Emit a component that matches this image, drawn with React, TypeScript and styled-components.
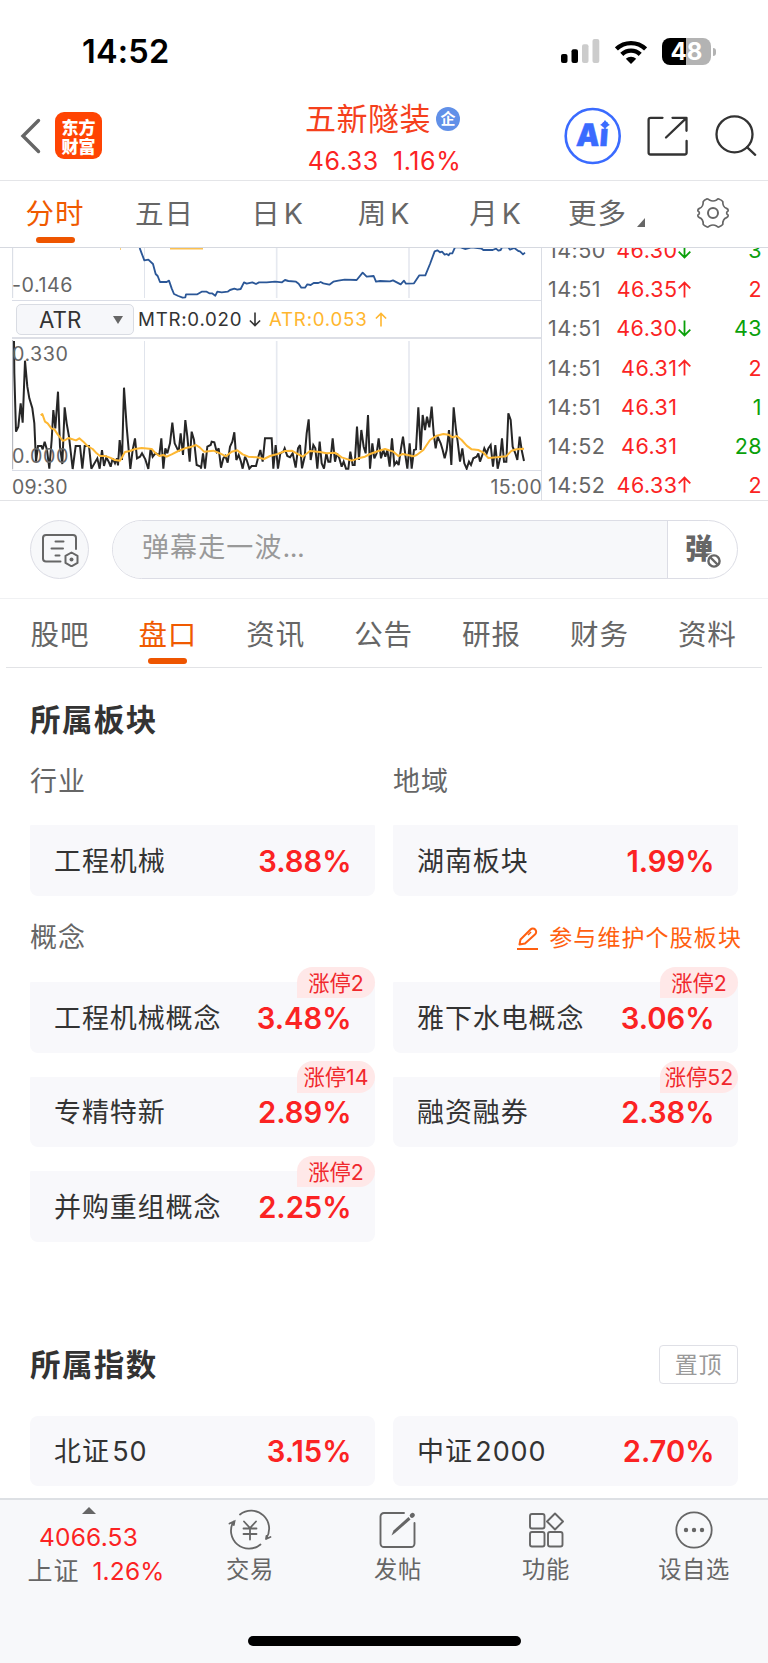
import React from 'react';
import styled, { createGlobalStyle } from 'styled-components';

const GlobalStyle = createGlobalStyle`
  * { box-sizing: border-box; }
  body {
    margin: 0;
    background: #fff;
    font-family: Inter, "Noto Sans CJK SC", sans-serif;
    color: #333;
  }
  svg { display: block; flex: none; }
`;

const RED = '#fb2323';
const GREEN = '#0aa00a';
const ORANGE = '#f05a00';
const GREY = '#666';

const Page = styled.div`
  width: 768px;
  height: 1663px;
  display: flex;
  flex-direction: column;
  overflow: hidden;
  white-space: nowrap;
`;

/* ---------- status bar ---------- */
const StatusBar = styled.div`
  height: 96px;
  flex: none;
  display: flex;
  align-items: flex-start;
  padding: 32px 52px 0 82px;
  justify-content: space-between;
`;
const Clock = styled.div`
  font-size: 32.5px;
  line-height: 39px;
  font-weight: 600;
  letter-spacing: 0.2px;
  color: #000;
`;
const StatusIcons = styled.div`
  display: flex;
  align-items: center;
  height: 39px;
  gap: 15px;
`;
const Battery = styled.div`
  width: 54px;
  height: 28px;
  display: flex;
  align-items: center;
  gap: 2px;
`;
const BatteryBody = styled.div`
  width: 49px;
  height: 27px;
  border-radius: 8px;
  background: linear-gradient(to right, #000 24px, #b3b3b3 24px);
  color: #fff;
  font-size: 24px;
  line-height: 27px;
  font-weight: 700;
  text-align: center;
`;
const BatteryNub = styled.div`
  width: 3px;
  height: 8px;
  border-radius: 0 3px 3px 0;
  background: #b3b3b3;
`;

/* ---------- header ---------- */
const Header = styled.header`
  height: 85px;
  flex: none;
  border-bottom: 1px solid #e4e5e8;
  display: grid;
  grid-template-columns: 282px 203px 1fr;
`;
const HeaderLeft = styled.div`
  display: flex;
  align-items: flex-start;
  padding: 16px 0 0 20px;
  gap: 13px;
`;
const Logo = styled.div`
  width: 47px;
  height: 47px;
  border-radius: 9px;
  background: #ff4403;
  color: #fff;
  display: flex;
  flex-direction: column;
  align-items: center;
  justify-content: center;
  font: 800 17px/19px "Noto Sans CJK SC", sans-serif;
`;
const HeaderCenter = styled.div`
  display: flex;
  flex-direction: column;
  align-items: center;
`;
const StockName = styled.div`
  display: flex;
  align-items: center;
  height: 38px;
  margin-top: 4px;
  gap: 5px;
  font-size: 31px;
  line-height: 38px;
  letter-spacing: 0.5px;
  margin-left: -2px;
  color: #f5401c;
`;
const CorpBadge = styled.span`
  width: 24px;
  height: 24px;
  border-radius: 50%;
  background: #6190e8;
  color: #fff;
  font-size: 15px;
  line-height: 23px;
  letter-spacing: 0;
  font-weight: 700;
  text-align: center;
`;
const StockQuote = styled.div`
  display: flex;
  gap: 14px;
  margin-top: 8px;
  font-size: 25px;
  line-height: 30px;
  letter-spacing: 0.6px;
  margin-left: 2px;
  color: ${RED};
`;
const HeaderRight = styled.div`
  display: flex;
  align-items: flex-start;
  padding: 11px 0 0 79px;
`;

/* ---------- period tabs ---------- */
const PeriodTabs = styled.nav`
  height: 67px;
  flex: none;
  border-bottom: 1.5px solid #d6d9e0;
  display: grid;
  grid-template-columns: 110px 109px 117px 96px 127px 75px 1fr;
`;
const Tab = styled.div<{ $active?: boolean; $top: number }>`
  display: flex;
  flex-direction: column;
  align-items: center;
  padding-top: ${(p) => p.$top}px;
  font-size: 28.5px;
  line-height: 36px;
  letter-spacing: 0.9px;
  word-spacing: -6px;
  color: ${(p) => (p.$active ? ORANGE : GREY)};
  &::after {
    content: '';
    width: 39px;
    height: 6px;
    margin-top: 5px;
    border-radius: 3px;
    background: ${(p) => (p.$active ? '#ee5500' : 'transparent')};
  }
`;
const MoreLabel = styled.span`
  display: flex;
  align-items: flex-end;
  gap: 10px;
  margin-left: 20px;
`;
const GearCell = styled.div`
  display: flex;
  align-items: flex-start;
  justify-content: center;
  padding: 15px 0 0 24px;
`;

/* ---------- market area ---------- */
const Market = styled.section`
  height: 253px;
  flex: none;
  display: flex;
  border-bottom: 1px solid #e2e3e6;
  overflow: hidden;
`;
const Charts = styled.div`
  width: 542px;
  display: flex;
  flex-direction: column;
  padding-left: 12px;
  border-right: 1px solid #dadde4;
`;
const Plot = styled.div<{ $h: number; $line: number }>`
  position: relative;
  height: ${(p) => p.$h}px;
  flex: none;
  border-bottom: ${(p) => p.$line}px solid #dadde6;
`;
const AxisLabel = styled.span<{ $top: number }>`
  position: absolute;
  left: 0;
  top: ${(p) => p.$top}px;
  font-size: 19.7px;
  line-height: 24px;
  letter-spacing: 0.5px;
  color: ${GREY};
`;
const IndicatorBar = styled.div`
  height: 38px;
  flex: none;
  display: flex;
  align-items: center;
  padding: 1px 0 0 4px;
  border-bottom: 2px solid #dddfe6;
  font-size: 18.7px;
  letter-spacing: 0.75px;
`;
const IndicatorSelect = styled.div`
  width: 118px;
  height: 31px;
  border: 1px solid #d9dce3;
  border-radius: 5px;
  background: #f6f7fa;
  display: flex;
  align-items: center;
  justify-content: space-between;
  padding: 0 10px 0 22px;
  margin-right: 4px;
  font-size: 22.3px;
  letter-spacing: 0;
`;
const IndicatorValue = styled.span<{ $color: string; $w: number }>`
  display: flex;
  align-items: center;
  justify-content: space-between;
  width: ${(p) => p.$w}px;
  margin-right: 8px;
  color: ${(p) => p.$color};
`;
const TimeAxis = styled.div`
  display: flex;
  justify-content: space-between;
  padding-top: 4px;
  margin-right: -1px;
  font-size: 19.5px;
  line-height: 24px;
  letter-spacing: 0.3px;
  color: ${GREY};
`;
const Trades = styled.div`
  flex: 1;
  display: flex;
  flex-direction: column;
  margin-top: -17.3px;
  padding: 0 6px 0 6px;
`;
const TradeRow = styled.div`
  height: 39.1px;
  flex: none;
  display: grid;
  grid-template-columns: 62px 67.5px 16px 1fr;
  align-items: center;
  font-size: 21.5px;
  letter-spacing: 0.45px;
`;
const TradeTime = styled.span`
  color: ${GREY};
`;
const TradePrice = styled.span`
  color: ${RED};
  text-align: right;
`;
const TradeCount = styled.span<{ $up: boolean }>`
  color: ${(p) => (p.$up ? RED : GREEN)};
  text-align: right;
`;

/* ---------- comment bar ---------- */
const CommentBar = styled.div`
  height: 98px;
  flex: none;
  display: flex;
  align-items: flex-start;
  padding: 19px 30px 0;
  gap: 23px;
  border-bottom: 1px solid #f0f1f3;
`;
const RoundButton = styled.div`
  width: 59px;
  height: 59px;
  border-radius: 50%;
  border: 1px solid #dcdde5;
  background: #f7f8fa;
  display: flex;
  align-items: center;
  justify-content: center;
`;
const CommentPill = styled.div`
  flex: 1;
  height: 59px;
  border: 1px solid #dcdde5;
  border-radius: 30px;
  display: flex;
  overflow: hidden;
`;
const CommentInput = styled.div`
  flex: 1;
  background: #f7f8fa;
  border-right: 1px solid #dcdde5;
  padding: 9px 0 0 29px;
  font-size: 27px;
  line-height: 36px;
  letter-spacing: 1.1px;
  color: #999;
`;
const Ellipsis = styled.span`
  letter-spacing: -0.5px;
`;
const BarrageToggle = styled.div`
  width: 69px;
  position: relative;
  padding: 8px 0 0 17px;
  font: 800 28px/36px "Noto Sans CJK SC", sans-serif;
  color: #666;
  svg { position: absolute; left: 38px; top: 32px; }
`;

/* ---------- content tabs ---------- */
const ContentTabs = styled.nav`
  height: 69px;
  flex: none;
  margin: 0 6px;
  border-bottom: 1px solid #e2e3e6;
  display: grid;
  grid-template-columns: repeat(7, 107.9px);
`;

/* ---------- plates ---------- */
const Content = styled.main`
  flex: 1;
  padding: 0 30px;
`;
const SectionHead = styled.div<{ $top: number; $h: number }>`
  display: flex;
  align-items: center;
  justify-content: space-between;
  margin-top: ${(p) => p.$top}px;
  height: ${(p) => p.$h}px;
`;
const SectionTitle = styled.h2`
  margin: 0;
  font-size: 30.5px;
  line-height: 40px;
  letter-spacing: 1.4px;
  font-weight: 600;
  color: #333;
`;
const SubTitle = styled.div`
  font-size: 27px;
  line-height: 36px;
  letter-spacing: 0.9px;
  color: ${GREY};
`;
const Columns = styled.div<{ $top?: number }>`
  display: grid;
  grid-template-columns: 345px 345px;
  column-gap: 18px;
  row-gap: 24px;
  margin-top: ${(p) => p.$top || 0}px;
`;
const MaintainLink = styled.div`
  display: flex;
  align-items: center;
  gap: 11px;
  margin-right: -4px;
  font-size: 23px;
  line-height: 30px;
  letter-spacing: 1.1px;
  color: #ff5f0f;
`;
const Card = styled.div<{ $round?: boolean }>`
  position: relative;
  height: 70.6px;
  border-radius: ${(p) => (p.$round ? '8px' : '1px 1px 8px 8px')};
  background: #f8f8fb;
  display: flex;
  align-items: center;
  justify-content: space-between;
  padding: 2px 23.5px 0 24px;
`;
const CardName = styled.span`
  font-size: 27px;
  line-height: 36px;
  letter-spacing: 0.9px;
  word-spacing: -6px;
  color: #333;
`;
const CardPercent = styled.span`
  font-size: 29.2px;
  line-height: 36px;
  font-weight: 600;
  color: ${RED};
`;
const LimitBadge = styled.span`
  position: absolute;
  right: 0;
  top: -15.5px;
  width: 78px;
  height: 31.5px;
  border-radius: 16px 16px 16px 0;
  background: #ffe8e8;
  color: #f0282d;
  font-size: 21.3px;
  line-height: 32px;
  text-align: center;
`;
const PinButton = styled.div`
  width: 79px;
  height: 39px;
  border: 1px solid #dfe0e6;
  border-radius: 4px;
  font-size: 23px;
  line-height: 38px;
  letter-spacing: 0.8px;
  text-align: center;
  color: #999;
`;

/* ---------- bottom bar ---------- */
const BottomBar = styled.footer`
  height: 165px;
  flex: none;
  display: flex;
  flex-direction: column;
  justify-content: space-between;
  border-top: 2px solid #dde0e4;
  background: #f7f8fa;
`;
const BottomItems = styled.div`
  display: grid;
  grid-template-columns: 176px repeat(4, 148px);
`;
const IndexItem = styled.div`
  display: flex;
  flex-direction: column;
  align-items: center;
  padding: 7px 0 0 1px;
  color: ${RED};
  font-size: 24.5px;
  line-height: 34px;
  letter-spacing: 0.2px;
`;
const IndexValue = styled.div`
  margin-top: 6px;
  line-height: 34px;
`;
const IndexChange = styled.div`
  display: flex;
  gap: 13px;
  margin-left: 15px;
`;
const IndexName = styled.span`
  color: ${GREY};
  font-size: 25px;
  letter-spacing: 1px;
`;
const NavItem = styled.div`
  display: flex;
  flex-direction: column;
  align-items: center;
  padding-top: 8px;
  font-size: 23.3px;
  line-height: 32px;
  letter-spacing: 0.6px;
  color: ${GREY};
  svg { margin-bottom: 2px; }
`;
const HomeIndicator = styled.div`
  width: 273px;
  height: 10px;
  border-radius: 5px;
  background: #000;
  margin: 0 auto 17px;
`;

/* Chart series, in thirds of a pixel */
const BLUE_A =
  '419,24 425,40 433,61 445,59 459,72 467,102 473,108 480,126 500,126 507,122 515,145 522,162 535,168 548,173 556,172 558,163 592,163 605,155 620,155 628,160 636,160 646,167 652,155 665,157 683,155 690,150 703,146 712,149 722,147 732,127 740,131 757,127 768,132 777,127 800,127 825,125 846,127 855,120 865,123 888,125 896,131 904,143 915,143 922,133 932,135 941,129 955,129 962,126 970,130 988,134 1000,125 1015,122 1034,119 1070,120 1088,98 1100,110 1121,108 1128,125 1140,123 1170,124 1179,121 1202,133 1212,122 1218,131 1242,130 1258,106 1276,106 1290,72 1304,34 1312,31 1320,37 1326,35 1334,44 1340,42 1346,46 1350,40 1357,40 1365,22 1382,22 1395,27 1415,22 1445,26 1450,30 1478,30 1488,26 1495,32 1502,30 1506,22 1525,22 1530,29 1543,24 1555,33 1560,34 1569,43 1575,38';
const MTR =
  '42,303 43,400 48,575 55,560 62,490 68,548 75,362 82,440 88,475 97,505 103,550 108,665 114,618 124,618 128,628 134,605 141,630 148,686 155,600 160,510 166,565 174,455 180,620 187,672 194,502 200,550 207,590 218,687 227,618 240,618 247,686 254,618 267,618 274,686 292,655 299,686 306,630 312,678 319,652 326,665 332,680 338,655 345,670 351,655 354,676 359,600 366,660 372,443 380,560 391,687 398,630 405,595 411,655 420,650 426,640 436,658 445,687 452,625 458,650 466,640 478,645 484,595 490,686 496,625 502,640 510,610 517,548 524,610 536,635 542,580 549,645 556,540 562,590 569,665 575,575 582,600 590,675 602,680 603,686 609,640 615,686 622,620 632,615 635,605 643,607 650,635 656,625 663,683 670,655 676,648 683,668 690,620 697,605 703,577 709,660 716,645 723,665 728,686 735,650 740,660 748,686 755,678 768,678 775,650 781,630 788,665 795,595 815,595 820,686 827,615 834,686 841,640 850,635 854,625 862,648 870,652 878,640 887,683 894,625 900,615 906,685 914,650 920,580 926,538 932,660 940,615 946,625 952,686 959,605 965,670 972,686 979,640 985,665 991,665 998,595 1005,665 1011,640 1018,655 1025,680 1031,665 1038,686 1045,686 1051,635 1058,675 1064,675 1071,560 1077,660 1084,570 1091,620 1097,640 1104,525 1110,686 1117,610 1123,655 1130,640 1136,595 1143,655 1150,630 1156,650 1162,630 1169,680 1176,595 1183,675 1190,665 1196,675 1203,625 1209,590 1216,645 1222,686 1229,610 1235,686 1242,630 1248,628 1255,502 1262,630 1268,525 1275,570 1281,530 1288,562 1295,500 1301,580 1307,625 1313,590 1322,610 1328,630 1334,655 1340,630 1347,570 1354,675 1361,502 1368,570 1373,605 1380,665 1387,625 1393,670 1400,686 1407,665 1413,675 1420,655 1430,650 1435,640 1440,665 1447,645 1453,625 1460,640 1465,625 1472,615 1479,680 1486,615 1493,686 1500,655 1506,595 1512,665 1519,665 1525,520 1532,540 1538,620 1546,640 1552,660 1559,590 1565,630 1572,663';
const ATR =
  '122,526 127,522 135,545 143,550 154,565 163,568 173,583 188,602 196,600 205,594 215,597 228,601 238,595 250,605 262,618 278,627 290,640 300,648 315,648 330,653 345,660 360,662 366,652 375,636 390,633 405,627 425,624 455,627 465,638 478,648 490,645 500,650 515,643 535,633 555,625 575,620 588,615 600,623 612,635 640,632 660,640 678,649 695,635 712,631 728,643 745,650 770,652 792,657 810,648 830,643 855,633 875,632 890,640 908,650 930,633 960,636 980,640 1005,638 1025,652 1055,662 1075,655 1095,650 1110,642 1135,633 1155,627 1180,635 1195,648 1208,642 1240,649 1250,645 1270,630 1290,600 1310,587 1330,582 1345,584 1358,592 1370,588 1385,600 1400,617 1415,628 1435,630 1450,638 1465,654 1490,652 1518,649 1535,632 1550,628 1572,626';

const Arrow = ({ up, color, w = 13, h = 17 }: { up: boolean; color: string; w?: number; h?: number }) => (
  <svg width={w} height={h} viewBox="0 0 13 17" fill="none" stroke={color} strokeWidth="1.8">
    {up ? <path d="M6.5 16.5V1.500M.7 7.300L6.500 1.500L12.300 7.300" /> : <path d="M6.5 .5v15M.7 9.700L6.500 15.500L12.300 9.700" />}
  </svg>
);

const trades: [string, string, number, number, boolean][] = [
  ['14:50', '46.30', -1, 3, false],
  ['14:51', '46.35', 1, 2, true],
  ['14:51', '46.30', -1, 43, false],
  ['14:51', '46.31', 1, 2, true],
  ['14:51', '46.31', 0, 1, false],
  ['14:52', '46.31', 0, 28, false],
  ['14:52', '46.33', 1, 2, true],
];

const concepts: [string, string, number][] = [
  ['工程机械概念', '3.48%', 2],
  ['雅下水电概念', '3.06%', 2],
  ['专精特新', '2.89%', 14],
  ['融资融券', '2.38%', 52],
  ['并购重组概念', '2.25%', 2],
];

const Plate = ({ name, pct, limit, round }: { name: string; pct: string; limit?: number; round?: boolean }) => (
  <Card $round={round}>
    <CardName>{name}</CardName>
    <CardPercent>{pct}</CardPercent>
    {limit ? <LimitBadge>涨停{limit}</LimitBadge> : null}
  </Card>
);

const SignalIcon = () => (
  <svg width="39" height="25" viewBox="0 0 39 25">
    <rect x="0" y="15" width="6.5" height="9" rx="2" />
    <rect x="10.5" y="10.3" width="6.5" height="13.7" rx="2" />
    <rect x="21" y="5.2" width="6.5" height="18.8" rx="2" fill="#ccc" />
    <rect x="31.5" y="0" width="6.8" height="24" rx="2" fill="#ccc" />
  </svg>
);

const WifiIcon = () => (
  <svg width="32" height="24" viewBox="0 0 32 24" fill="none" stroke="#000" strokeWidth="4.4">
    <path d="M1.4 9A21 21 0 0 1 30.6 9" />
    <path d="M6.8 14.4A13.2 13.2 0 0 1 25.2 14.4" />
    <path d="M16 24L10.8 18.8A7.5 7.5 0 0 1 21.2 18.8Z" fill="#000" stroke="none" />
  </svg>
);

const AiIcon = () => (
  <svg width="58" height="58" viewBox="0 0 58 58">
    <circle cx="28.7" cy="29" r="27" fill="none" stroke="#3a6bff" strokeWidth="2.6" />
    <text x="11" y="39.5" fontFamily="Inter, sans-serif" fontWeight="900" fontSize="31" fill="#3a6bff" stroke="#3a6bff" strokeWidth="0.5" textLength="32" lengthAdjust="spacingAndGlyphs" transform="translate(3.5 0) skewX(-4)">Ai</text>
    <path d="M41 13.500l1.500 2.800 2.800 1.500-2.800 1.500-1.500 2.800-1.500-2.800-2.800-1.500 2.800-1.500z" fill="#3a6bff" stroke="#3a6bff" strokeWidth="0.8" />
  </svg>
);

const GearIcon = () => (
  <svg width="34" height="34" viewBox="-17 -17 34 34" fill="none" stroke="#666" strokeWidth="1.7" strokeLinejoin="round">
    <path d="M-5.8 -14.2Q-4.6 -14.2 -3.6 -13Q0 -11 3.6 -13Q4.6 -14.2 5.8 -14Q9 -12.8 9.8 -11.4Q9.6 -6 13.6 -4.6Q15.4 -3.8 15.2 -2.200Q12 0 15.200 2.200Q15.4 3.8 13.6 4.6Q9.6 6 9.8 11.4Q9 12.8 5.8 14Q4.6 14.2 3.6 13Q0 11 -3.6 13Q-4.6 14.2 -5.8 14Q-9 12.8 -9.8 11.4Q-9.6 6 -13.6 4.6Q-15.4 3.8 -15.2 2.200Q-12 0 -15.200 -2.200Q-15.4 -3.8 -13.6 -4.6Q-9.6 -6 -9.8 -11.4Q-9 -12.8 -5.8 -14.2Z" />
    <circle r="5" strokeWidth="2" />
  </svg>
);

export default function App() {
  return (
    <Page>
      <GlobalStyle />
      <StatusBar>
        <Clock>14:52</Clock>
        <StatusIcons>
          <SignalIcon />
          <WifiIcon />
          <Battery>
            <BatteryBody>48</BatteryBody>
            <BatteryNub />
          </Battery>
        </StatusIcons>
      </StatusBar>

      <Header>
        <HeaderLeft>
          <svg width="22" height="48" viewBox="0 0 22 48" fill="none" stroke="#666" strokeWidth="3.4">
            <path d="M18.5 8.500L3 24L18.500 39.500" strokeLinecap="round" />
          </svg>
          <Logo>
            <span>东方</span>
            <span>财富</span>
          </Logo>
        </HeaderLeft>
        <HeaderCenter>
          <StockName>
            五新隧装<CorpBadge>企</CorpBadge>
          </StockName>
          <StockQuote>
            <span>46.33</span>
            <span>1.16%</span>
          </StockQuote>
        </HeaderCenter>
        <HeaderRight>
          <AiIcon />
          <svg width="66" height="58" viewBox="0 0 66 58" fill="none" stroke="#333" strokeWidth="2.3" strokeLinecap="round" strokeLinejoin="round">
            <path d="M40.5 10.800H28.600a2 2 0 0 0-2 2v32.700a2 2 0 0 0 2 2h34a2 2 0 0 0 2-2V34" />
            <path d="M50.5 10.800h14v13M64 11.300L44 30.500" />
          </svg>
          <svg width="76" height="58" viewBox="0 0 76 58" fill="none" stroke="#333" strokeWidth="2.3" strokeLinecap="round">
            <circle cx="46.5" cy="27.3" r="18" />
            <path d="M59 40.200l8.200 7.600" />
          </svg>
        </HeaderRight>
      </Header>

      <PeriodTabs>
        <Tab $top={15} $active>分时</Tab>
        <Tab $top={15}>五日</Tab>
        <Tab $top={15}>日 K</Tab>
        <Tab $top={15}>周 K</Tab>
        <Tab $top={15}>月 K</Tab>
        <Tab $top={15}>
          <MoreLabel>
            更多
            <svg width="8" height="14" viewBox="0 0 8 14"><path d="M8 0v9H0z" fill="#666" /></svg>
          </MoreLabel>
        </Tab>
        <GearCell><GearIcon /></GearCell>
      </PeriodTabs>

      <Market>
        <Charts>
          <Plot $h={53} $line={1}>
            <svg width="529" height="52" viewBox="36 24 1587 156" fill="none">
              <path d="M38 24V174" stroke="#d5d9e2" strokeWidth="3" />
              <path d="M433.5 24V174" stroke="#e0e4ec" strokeWidth="3" />
              <path d="M830 24V174M1227 24V174" stroke="#e6e9f0" strokeWidth="5" />
              <path d="M360 27h3M510 26h99" stroke="#fbc050" strokeWidth="5" />
              <polyline points={BLUE_A} stroke="#2b5797" strokeWidth="5.5" strokeLinejoin="round" />
            </svg>
            <AxisLabel $top={25}>-0.146</AxisLabel>
          </Plot>
          <IndicatorBar>
            <IndicatorSelect>
              ATR
              <svg width="10" height="8" viewBox="0 0 10 8"><path d="M0 0h10L5 8z" fill="#666" /></svg>
            </IndicatorSelect>
            <IndicatorValue $color="#333" $w={123}>
              MTR:0.020
              <Arrow up={false} color="#333" w={12} h={15} />
            </IndicatorValue>
            <IndicatorValue $color="#ffb62e" $w={118}>
              ATR:0.053
              <Arrow up color="#ffb62e" w={12} h={15} />
            </IndicatorValue>
          </IndicatorBar>
          <Plot $h={132} $line={1}>
            <svg width="529" height="131" viewBox="36 297 1587 393" fill="none">
              <path d="M38 300V688" stroke="#aaadb5" strokeWidth="3" />
              <path d="M433.5 303V690" stroke="#e0e4ec" strokeWidth="3" />
              <path d="M830 303V690M1227 303V690" stroke="#e6e9f0" strokeWidth="5" />
              <polyline points={MTR} stroke="#262626" strokeWidth="6" strokeLinejoin="miter" strokeMiterlimit="3" />
              <polyline points={ATR} stroke="#fdb834" strokeWidth="6" strokeLinejoin="round" />
            </svg>
            <AxisLabel $top={2.5}>0.330</AxisLabel>
            <AxisLabel $top={105}>0.000</AxisLabel>
          </Plot>
          <TimeAxis>
            <span>09:30</span>
            <span>15:00</span>
          </TimeAxis>
        </Charts>
        <Trades>
          {trades.map(([time, price, dir, count, up], i) => (
            <TradeRow key={i}>
              <TradeTime>{time}</TradeTime>
              <TradePrice>{price}</TradePrice>
              <span>{dir !== 0 && <Arrow up={dir > 0} color={dir > 0 ? RED : GREEN} />}</span>
              <TradeCount $up={up}>{count}</TradeCount>
            </TradeRow>
          ))}
        </Trades>
      </Market>

      <CommentBar>
        <RoundButton>
          <svg width="38" height="34" viewBox="0 0 38 34" fill="none" stroke="#666" strokeWidth="2" strokeLinecap="round">
            <path d="M19.5 28.500H5a3 3 0 0 1-3-3V5a3 3 0 0 1 3-3h27a3 3 0 0 1 3 3v11" />
            <path d="M14.5 8.500h8M10.500 15.500h11.500M14.500 22.500h4" />
            <path d="M30.5 19.500l6 3.400v7l-6 3.400-6-3.400v-7z" strokeLinejoin="round" />
            <circle cx="30.5" cy="26.5" r="2" fill="#666" stroke="none" />
          </svg>
        </RoundButton>
        <CommentPill>
          <CommentInput>弹幕走一波<Ellipsis>...</Ellipsis></CommentInput>
          <BarrageToggle>
            弹
            <svg width="16" height="16" viewBox="0 0 16 16">
              <circle cx="8" cy="8" r="8" fill="#fff" />
              <circle cx="8" cy="8" r="5.6" fill="none" stroke="#666" strokeWidth="2.4" />
              <path d="M4.5 4.500l7 7" stroke="#666" strokeWidth="2.4" />
            </svg>
          </BarrageToggle>
        </CommentPill>
      </CommentBar>

      <ContentTabs>
        {['股吧', '盘口', '资讯', '公告', '研报', '财务', '资料'].map((t) => (
          <Tab key={t} $top={17.5} $active={t === '盘口'}>{t}</Tab>
        ))}
      </ContentTabs>

      <Content>
        <SectionHead $top={31.5} $h={40}>
          <SectionTitle>所属板块</SectionTitle>
        </SectionHead>
        <Columns $top={24}>
          <SubTitle>行业</SubTitle>
          <SubTitle>地域</SubTitle>
        </Columns>
        <Columns $top={25.8}>
          <Plate name="工程机械" pct="3.88%" />
          <Plate name="湖南板块" pct="1.99%" />
        </Columns>
        <SectionHead $top={24.4} $h={36}>
          <SubTitle>概念</SubTitle>
          <MaintainLink>
            <svg width="21" height="23" viewBox="0 0 21 23" fill="none" stroke="#ff5f0f" strokeWidth="2" strokeLinejoin="round">
              <path d="M0 22h21" />
              <path d="M2.5 17.500l1-5L13.500 2.500a3.300 3.300 0 0 1 4.700 4.700L8 16.500z" />
              <path d="M11 8l3-3" strokeWidth="1.6" />
            </svg>
            参与维护个股板块
          </MaintainLink>
        </SectionHead>
        <Columns $top={26}>
          {concepts.map(([name, pct, limit]) => (
            <Plate key={name} name={name} pct={pct} limit={limit} />
          ))}
        </Columns>
        <SectionHead $top={102.5} $h={40}>
          <SectionTitle>所属指数</SectionTitle>
          <PinButton>置顶</PinButton>
        </SectionHead>
        <Columns $top={31.1}>
          <Plate name="北证 50" pct="3.15%" round />
          <Plate name="中证 2000" pct="2.70%" round />
        </Columns>
      </Content>

      <BottomBar>
        <BottomItems>
          <IndexItem>
            <svg width="14" height="7" viewBox="0 0 14 7"><path d="M0 7L7 0l7 7z" fill="#666" /></svg>
            <IndexValue>4066.53</IndexValue>
            <IndexChange>
              <IndexName>上证</IndexName>
              <span>1.26%</span>
            </IndexChange>
          </IndexItem>
          <NavItem>
            <svg width="44" height="44" viewBox="0 0 44 44" fill="none" stroke="#666" strokeWidth="1.8" strokeLinecap="round">
              <path d="M12 6.500A18 18 0 0 1 38.200 30.500M38 31l.500-3M38 31l4.500-2" />
              <path d="M32.5 36.500A18 18 0 0 1 5.500 13.500M1.500 15.500L6.500 13.200L5.800 17" />
              <path d="M16 13.500l6 6.500 6-6.500M22 20v11.500M15.500 20.500h13M15.500 26h13" />
            </svg>
            交易
          </NavItem>
          <NavItem>
            <svg width="44" height="44" viewBox="0 0 44 44" fill="none" stroke="#666" strokeWidth="1.9" strokeLinecap="round">
              <path d="M28 5H8a3.500 3.500 0 0 0-3.500 3.500v27A3.500 3.500 0 0 0 8 39h27a3.500 3.500 0 0 0 3.500-3.500V15" />
              <path d="M15.5 27.500l2-5L32.500 9l2 2.500L19 25z" fill="#666" stroke="none" />
              <path d="M36 7.700l.6-.6" strokeWidth="4.5" />
            </svg>
            发帖
          </NavItem>
          <NavItem>
            <svg width="44" height="44" viewBox="0 0 44 44" fill="none" stroke="#666" strokeWidth="1.9" strokeLinejoin="round">
              <rect x="6" y="6" width="14.5" height="14.5" rx="2" />
              <rect x="6" y="24" width="14.5" height="14.5" rx="2" />
              <rect x="24" y="24" width="14.5" height="14.5" rx="2" />
              <path d="M31 5.500l8 8-8 8-8-8z" />
            </svg>
            功能
          </NavItem>
          <NavItem>
            <svg width="44" height="44" viewBox="0 0 44 44" fill="none" stroke="#666" strokeWidth="1.8">
              <circle cx="22" cy="22" r="17.7" />
              <g fill="#666" stroke="none">
                <circle cx="14" cy="22" r="2.2" />
                <circle cx="22" cy="22" r="2.2" />
                <circle cx="30" cy="22" r="2.2" />
              </g>
            </svg>
            设自选
          </NavItem>
        </BottomItems>
        <HomeIndicator />
      </BottomBar>
    </Page>
  );
}
